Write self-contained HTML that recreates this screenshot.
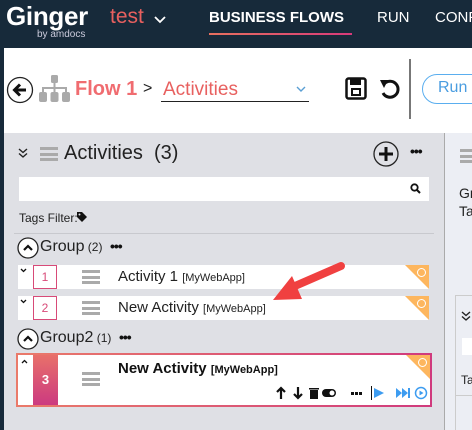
<!DOCTYPE html>
<html><head><style>
*{margin:0;padding:0;box-sizing:border-box}
html,body{width:472px;height:430px;overflow:hidden}
body{position:relative;background:#fff;font-family:"Liberation Sans",sans-serif}
.a{position:absolute;white-space:nowrap}
.hb{position:absolute;width:18px;height:14px;border-top:3px solid #aaa;border-bottom:3px solid #aaa}
.hb:after{content:"";position:absolute;left:0;right:0;top:2.5px;height:3px;background:#aaa}
.row{position:absolute;left:18px;width:411px;height:24px;background:#fff}
.num{position:absolute;left:15px;top:0;width:24px;height:24px;border:1px solid #d84a78;color:#d84a78;font-size:12px;text-align:center;line-height:22px}
.tri{position:absolute;right:0;top:0;width:0;height:0;border-top:24px solid #fdb65e;border-left:24px solid transparent}
.clk{position:absolute;right:3px;top:3px;width:9px;height:9px;border:1.5px solid #fff;border-radius:50%}
.dots{font-weight:bold;font-size:14px;letter-spacing:-1px;color:#111}
</style></head><body>
<div class="a" style="left:0;top:0;width:472px;height:48px;background:#172a3a"></div>
<div class="a" style="left:6px;top:1px;color:#fff;font-size:26px;font-weight:bold;letter-spacing:-0.3px">Ginger</div>
<div class="a" style="left:37px;top:29px;color:#ccd;font-size:10px">by amdocs</div>
<div class="a" style="left:110px;top:5px;color:#e8605f;font-size:21px">test</div>
<svg class="a" style="left:154px;top:16px" width="12" height="8"><path d="M1 1l5 5 5-5" stroke="#fff" stroke-width="1.8" fill="none"/></svg>
<div class="a" style="left:209px;top:9px;color:#fff;font-size:15px;font-weight:bold">BUSINESS FLOWS</div>
<div class="a" style="left:209px;top:33px;width:143px;height:2px;background:linear-gradient(90deg,#e8705f,#d83a7a)"></div>
<div class="a" style="left:377px;top:9px;color:#fff;font-size:15px">RUN</div>
<div class="a" style="left:435px;top:9px;color:#fff;font-size:15px">CONF</div>
<div class="a" style="left:0;top:48px;width:4px;height:382px;background:#172a3a"></div>
<svg class="a" style="left:6px;top:76px" width="28" height="28"><circle cx="14" cy="14" r="12.5" stroke="#222" stroke-width="1.3" fill="none"/><path d="M20 14H9M14 8.5L8.5 14 14 19.5" stroke="#111" stroke-width="3" fill="none"/></svg>
<svg class="a" style="left:38px;top:75px" width="33" height="28"><g fill="#aaa"><rect x="13" y="0" width="7" height="8" rx="1.5"/><rect x="15.5" y="8" width="2" height="5"/><rect x="4" y="12" width="25" height="2"/><rect x="4" y="12" width="2" height="6"/><rect x="27" y="12" width="2" height="6"/><rect x="15.5" y="12" width="2" height="6"/><rect x="1" y="17" width="8" height="10" rx="2"/><rect x="12.5" y="17" width="8" height="10" rx="2"/><rect x="24" y="17" width="8" height="10" rx="2"/></g></svg>
<div class="a" style="left:75px;top:78px;color:#f06c70;font-size:20px;font-weight:bold">Flow 1</div>
<div class="a" style="left:143px;top:80px;color:#222;font-size:16px">&gt;</div>
<div class="a" style="left:163px;top:79px;color:#e8605f;font-size:19px">Activities</div>
<div class="a" style="left:161px;top:101px;width:148px;height:1px;background:#222"></div>
<svg class="a" style="left:296px;top:86px" width="10" height="7"><path d="M1 1l4 4 4-4" stroke="#5a9fd4" stroke-width="1.4" fill="none"/></svg>
<svg class="a" style="left:345px;top:77px" width="22" height="23"><rect x="1.5" y="1.5" width="19" height="20" rx="2" stroke="#111" stroke-width="2.5" fill="none"/><rect x="5" y="2" width="11" height="6" fill="#111"/><rect x="7" y="12" width="8" height="6" stroke="#111" stroke-width="2" fill="none"/></svg>
<svg class="a" style="left:379px;top:78px" width="22" height="22"><path d="M5 6A8 8 0 1 1 4 15" stroke="#111" stroke-width="3" fill="none"/><path d="M1 2l8 0-4 8z" fill="#111"/></svg>
<div class="a" style="left:409px;top:59px;width:2px;height:60px;background:#777"></div>
<div class="a" style="left:422px;top:74px;width:50px;height:30px;overflow:hidden"><div style="width:80px;height:30px;border:1.5px solid #5aaeef;border-radius:15px;color:#4a9de0;font-size:16px;padding:4px 0 0 15px;white-space:nowrap">Run Flow</div></div>
<div class="a" style="left:4px;top:133px;width:440px;height:297px;background:#dfe0e5"></div>
<div class="a" style="left:444px;top:133px;width:1px;height:297px;background:#aaa"></div>
<div class="a" style="left:445px;top:133px;width:27px;height:297px;background:#eceef4"></div>
<svg class="a" style="left:18px;top:148px" width="10" height="10"><path d="M1 1l4 3.5 4-3.5M1 5.5l4 3.5 4-3.5" stroke="#222" stroke-width="1.4" fill="none"/></svg>
<div class="hb" style="left:40px;top:147px"></div>
<div class="a" style="left:64px;top:142px;color:#222;font-size:20px">Activities&nbsp; (3)</div>
<svg class="a" style="left:373px;top:141px" width="26" height="26"><circle cx="13" cy="13" r="12" stroke="#222" stroke-width="1.3" fill="none"/><path d="M13 6v14M6 13h14" stroke="#111" stroke-width="3"/></svg>
<div class="a dots" style="left:410px;top:143px">•••</div>
<div class="a" style="left:19px;top:177px;width:410px;height:24px;background:#fff"></div>
<svg class="a" style="left:410px;top:183px" width="11" height="11"><circle cx="4.5" cy="4.5" r="3.2" stroke="#111" stroke-width="1.8" fill="none"/><path d="M7 7l3 3" stroke="#111" stroke-width="2"/></svg>
<div class="a" style="left:19px;top:211px;color:#222;font-size:12px">Tags Filter:</div>
<svg class="a" style="left:76px;top:211px" width="12" height="12"><path d="M1 1h5l5 5-5 5-5-5z" fill="#111"/><circle cx="3.5" cy="3.5" r="1" fill="#dfe0e5"/></svg>
<div class="a" style="left:14px;top:233px;width:420px;height:1px;background:#c8c9ce"></div>
<svg class="a" style="left:17px;top:237px" width="22" height="22"><circle cx="11" cy="11" r="10" stroke="#222" stroke-width="1.3" fill="#fff"/><path d="M7 13l4-4 4 4" stroke="#111" stroke-width="2.2" fill="none"/></svg>
<div class="a" style="left:40px;top:238px;color:#222;font-size:16px">Group<span style="font-size:12px"> (2)</span></div>
<div class="a dots" style="left:110px;top:238px">•••</div>
<div class="row" style="top:265px"><svg class="a" style="left:2px;top:3px" width="7" height="5"><path d="M1 1l2.5 2.5 2.5-2.5" stroke="#111" stroke-width="1.3" fill="none"/></svg><div class="num">1</div><div class="hb" style="left:64px;top:5px"></div><div class="a" style="left:100px;top:3px;font-size:15px;color:#222">Activity 1 <span style="font-size:11px">[MyWebApp]</span></div><div class="tri"></div><div class="clk"></div></div>
<div class="row" style="top:296px"><svg class="a" style="left:2px;top:3px" width="7" height="5"><path d="M1 1l2.5 2.5 2.5-2.5" stroke="#111" stroke-width="1.3" fill="none"/></svg><div class="num">2</div><div class="hb" style="left:64px;top:5px"></div><div class="a" style="left:100px;top:3px;font-size:15px;color:#222">New Activity <span style="font-size:11px">[MyWebApp]</span></div><div class="tri"></div><div class="clk"></div></div>
<svg class="a" style="left:17px;top:328px" width="22" height="22"><circle cx="11" cy="11" r="10" stroke="#222" stroke-width="1.3" fill="#fff"/><path d="M7 13l4-4 4 4" stroke="#111" stroke-width="2.2" fill="none"/></svg>
<div class="a" style="left:40px;top:329px;color:#222;font-size:16px">Group2<span style="font-size:12px"> (1)</span></div>
<div class="a dots" style="left:119px;top:329px">•••</div>
<div class="a" style="left:16px;top:353px;width:416px;height:54px;background:linear-gradient(90deg,#ea7a6a,#d03a7d);padding:2px">
<div style="position:relative;width:100%;height:100%;background:#fff">
<svg class="a" style="left:3px;top:4px" width="7" height="5"><path d="M1 4l2.5-2.5 2.5 2.5" stroke="#111" stroke-width="1.3" fill="none"/></svg>
<div class="a" style="left:15px;top:0;width:25px;height:50px;background:linear-gradient(180deg,#e8706a,#cc3a80);color:#fff;font-size:13px;font-weight:bold;text-align:center;line-height:50px">3</div>
<div class="hb" style="left:64px;top:17px"></div>
<div class="a" style="left:100px;top:5px;font-size:15px;font-weight:bold;color:#111">New Activity <span style="font-size:11px">[MyWebApp]</span></div>
<div class="tri"></div><div class="clk"></div>
<svg class="a" style="left:258px;top:31px" width="160" height="14"><g fill="#111" stroke="#111"><path d="M5 13V3M1 6l4-4 4 4" stroke-width="2.2" fill="none"/><path d="M22 1v10M18 8l4 4 4-4" stroke-width="2.2" fill="none"/><rect x="34" y="4" width="8" height="9" stroke="none"/><rect x="33" y="2" width="10" height="1.5" stroke="none"/><rect x="46" y="3" width="14" height="8" rx="4" stroke="none"/><circle cx="56" cy="7" r="2.5" fill="#fff" stroke="none"/><rect x="75" y="6" width="3" height="3" stroke="none"/><rect x="79" y="6" width="3" height="3" stroke="none"/><rect x="83" y="6" width="3" height="3" stroke="none"/><rect x="95" y="0" width="1" height="14" stroke="none"/></g><g fill="#3d9cf0"><path d="M98 2l10 5-10 5z"/><path d="M120 2l6 5-6 5zM126 2l6 5-6 5z"/><rect x="132" y="2" width="2" height="10"/><circle cx="145" cy="7" r="5.5" stroke="#3d9cf0" stroke-width="1.5" fill="none"/><path d="M143.5 4.5l4 2.5-4 2.5z"/></g></svg>
</div></div>
<div class="hb" style="left:460px;top:149px"></div>
<div class="a" style="left:459px;top:185px;font-size:14px;color:#222">Gr</div>
<div class="a" style="left:459px;top:203px;font-size:14px;color:#222">Ta</div>
<div class="a" style="left:455px;top:295px;width:17px;height:135px;background:#eceef4;border-left:1px solid #ccc;border-top:1px solid #ccc"></div>
<svg class="a" style="left:461px;top:311px" width="10" height="10"><path d="M1 1l4 3.5 4-3.5M1 5.5l4 3.5 4-3.5" stroke="#222" stroke-width="1.4" fill="none"/></svg>
<div class="a" style="left:462px;top:338px;width:10px;height:17px;background:#fff"></div>
<div class="a" style="left:461px;top:373px;font-size:12px;color:#222">Ta</div>
<div class="a" style="left:456px;top:395px;width:16px;height:1px;background:#ccc"></div>
<svg class="a" style="left:265px;top:255px" width="90" height="55"><path d="M76 11L30 31" stroke="#f04040" stroke-width="8" stroke-linecap="round"/><path d="M8 45L27 21 37 44z" fill="#f04040"/></svg>
</body></html>
